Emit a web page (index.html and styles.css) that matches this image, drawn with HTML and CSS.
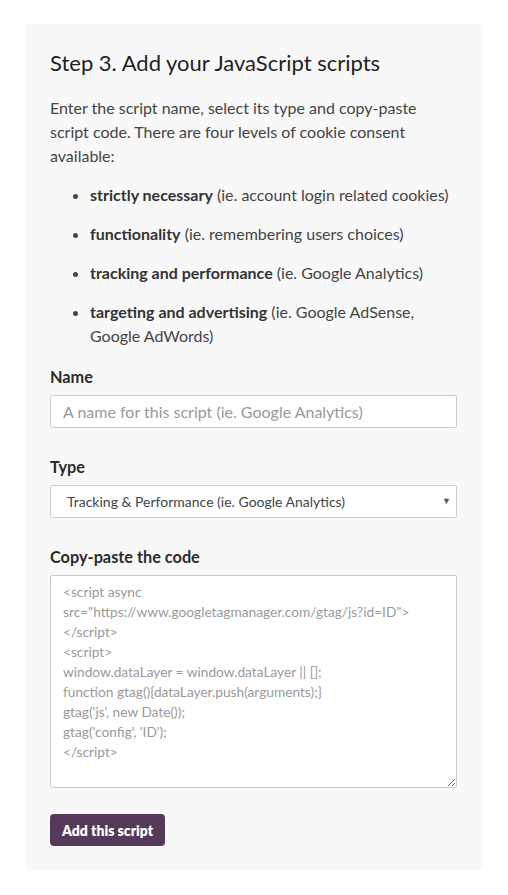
FILE: index.html
```html
<!DOCTYPE html>
<html lang="en">
<head>
<meta charset="utf-8">
<title>Add your JavaScript scripts</title>
<link rel="stylesheet" href="styles.css">
</head>
<body>
<section class="card">
  <h2 class="title">Step 3. Add your JavaScript scripts</h2>
  <p class="intro">Enter the script name, select its type and copy-paste script code. There are four levels of cookie consent available:</p>
  <ul class="levels">
    <li><strong>strictly necessary</strong> (ie. account login related cookies)</li>
    <li><strong>functionality</strong> (ie. remembering users choices)</li>
    <li><strong>tracking and performance</strong> (ie. Google Analytics)</li>
    <li><strong>targeting and advertising</strong> (ie. Google AdSense, Google AdWords)</li>
  </ul>
  <form class="form">
    <div class="field">
      <label class="label" for="name">Name</label>
      <input class="input" id="name" type="text" placeholder="A name for this script (ie. Google Analytics)">
    </div>
    <div class="field">
      <label class="label" for="type">Type</label>
      <div class="select-wrap">
        <select class="select" id="type">
          <option>Tracking &amp; Performance (ie. Google Analytics)</option>
        </select>
        <span class="arrow">&#9660;</span>
      </div>
    </div>
    <div class="field field-code">
      <label class="label" for="code">Copy-paste the code</label>
      <textarea class="code" id="code" placeholder="&lt;script async&#10;src=&quot;https://www.googletagmanager.com/gtag/js?id=ID&quot;&gt;&#10;&lt;/script&gt;&#10;&lt;script&gt;&#10;window.dataLayer = window.dataLayer || [];&#10;function gtag(){dataLayer.push(arguments);}&#10;gtag('js', new Date());&#10;gtag('config', 'ID');&#10;&lt;/script&gt;"></textarea>
    </div>
    <button class="btn" type="button">Add this script</button>
  </form>
</section>
</body>
</html>
```

FILE: styles.css
```css
* { box-sizing: border-box; }
html, body { margin: 0; padding: 0; background: #ffffff; }
body {
  font-family: Lato, "Open Sans", sans-serif;
  color: #444444;
  padding: 24px 26px 24px 25px;
}
.card {
  background: #f8f8f8;
  border-radius: 5px;
  padding: 25px 25px 24px 25px;
}
.title {
  margin: 0;
  font-size: 22px;
  font-weight: 400;
  color: #1f1f1f;
  line-height: 28px;
}
.intro {
  margin: 19px 0 0 0;
  font-size: 16px;
  line-height: 24px;
  color: #444444;
}
.levels {
  margin: 15px 0 0 0;
  padding: 0 0 0 40px;
  font-size: 16px;
  line-height: 24px;
  display: flex;
  flex-direction: column;
  gap: 15px;
}
.levels li { padding-left: 0; }
.levels strong { color: #333333; font-weight: 700; }
.form {
  margin-top: 19px;
  display: flex;
  flex-direction: column;
  align-items: flex-start;
}
.field {
  width: 100%;
  display: flex;
  flex-direction: column;
  margin-bottom: 29px;
}
.field-code { margin-bottom: 26px; }
.label {
  font-size: 16.3px;
  font-weight: 700;
  color: #2b2b2b;
  line-height: 20px;
  margin-bottom: 8px;
}
.input, .select, .code {
  width: 100%;
  border: 1px solid #cccccc;
  border-radius: 2px;
  background: #ffffff;
  font-family: Lato, "Open Sans", sans-serif;
  margin: 0;
}
.input {
  height: 33px;
  padding: 0 12px;
  font-size: 16px;
  color: #444;
}
.input::placeholder { color: #999999; }
.select-wrap { position: relative; width: 100%; }
.select {
  -webkit-appearance: none;
  appearance: none;
  height: 33px;
  padding: 0 30px 0 16px;
  font-size: 14px;
  color: #444444;
}
.arrow {
  position: absolute;
  right: 6px;
  top: 11px;
  font-size: 9px;
  line-height: 10px;
  color: #555555;
  pointer-events: none;
}
.code {
  display: block;
  height: 213px;
  padding: 6px 12px;
  font-size: 13.7px;
  line-height: 20px;
  color: #444;
  resize: vertical;
}
.code::placeholder { color: #999999; }
.btn {
  margin-top: 0;
  height: 32px;
  width: 115px;
  border: none;
  border-radius: 4px;
  background: #543a58;
  color: #ffffff;
  font-family: Lato, "Open Sans", sans-serif;
  font-weight: 800;
  font-size: 14px;
  padding: 0;
}
```
